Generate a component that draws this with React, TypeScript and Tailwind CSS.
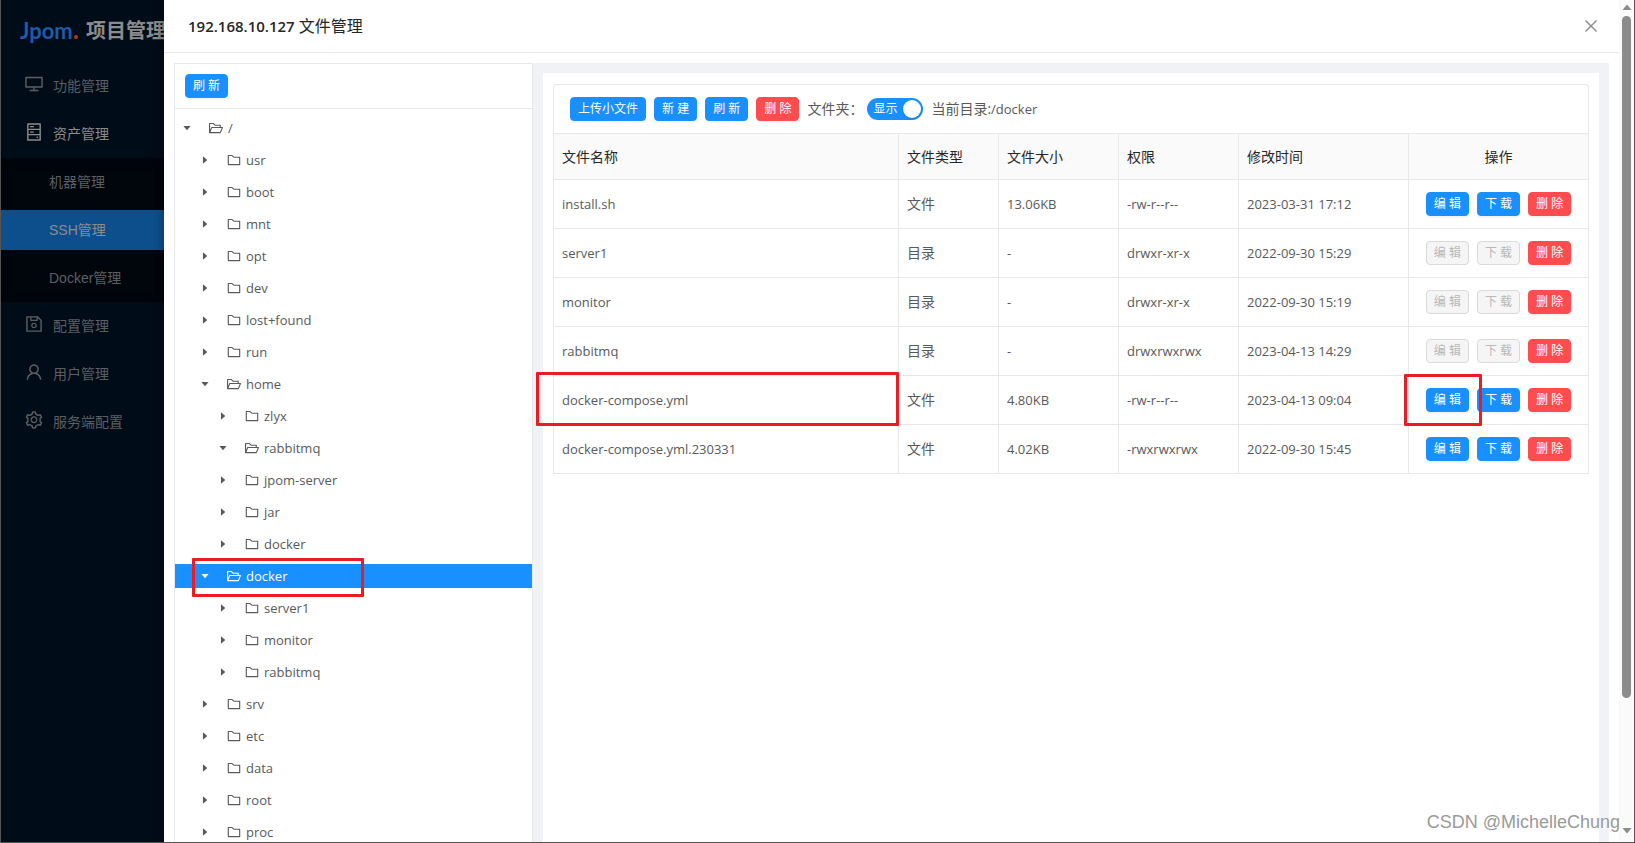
import { useState } from "react";
import clsx from "clsx";
import {
  AiFillCaretDown,
  AiFillCaretRight,
  AiOutlineClose,
  AiOutlineDesktop,
  AiOutlineFolder,
  AiOutlineFolderOpen,
  AiOutlineHdd,
  AiOutlineSave,
  AiOutlineSetting,
  AiOutlineUser,
} from "react-icons/ai";

const MENU = [
  { label: "功能管理", icon: AiOutlineDesktop },
  {
    label: "资产管理",
    icon: AiOutlineHdd,
    children: ["机器管理", "SSH管理", "Docker管理"],
  },
  { label: "配置管理", icon: AiOutlineSave },
  { label: "用户管理", icon: AiOutlineUser },
  { label: "服务端配置", icon: AiOutlineSetting },
];

const INDENT = ["pl-[5px]", "pl-[23px]", "pl-[41px]"];

const TREE = [
  { name: "/", level: 0, open: true },
  { name: "usr", level: 1 },
  { name: "boot", level: 1 },
  { name: "mnt", level: 1 },
  { name: "opt", level: 1 },
  { name: "dev", level: 1 },
  { name: "lost+found", level: 1 },
  { name: "run", level: 1 },
  { name: "home", level: 1, open: true },
  { name: "zlyx", level: 2 },
  { name: "rabbitmq", level: 2, open: true },
  { name: "jpom-server", level: 2 },
  { name: "jar", level: 2 },
  { name: "docker", level: 2 },
  { name: "docker", level: 1, open: true, selected: true },
  { name: "server1", level: 2 },
  { name: "monitor", level: 2 },
  { name: "rabbitmq", level: 2 },
  { name: "srv", level: 1 },
  { name: "etc", level: 1 },
  { name: "data", level: 1 },
  { name: "root", level: 1 },
  { name: "proc", level: 1 },
];

const FILES = [
  { name: "install.sh", dir: false, size: "13.06KB", mode: "-rw-r--r--", time: "2023-03-31 17:12" },
  { name: "server1", dir: true, size: "-", mode: "drwxr-xr-x", time: "2022-09-30 15:29" },
  { name: "monitor", dir: true, size: "-", mode: "drwxr-xr-x", time: "2022-09-30 15:19" },
  { name: "rabbitmq", dir: true, size: "-", mode: "drwxrwxrwx", time: "2023-04-13 14:29" },
  { name: "docker-compose.yml", dir: false, size: "4.80KB", mode: "-rw-r--r--", time: "2023-04-13 09:04", marked: true },
  { name: "docker-compose.yml.230331", dir: false, size: "4.02KB", mode: "-rwxrwxrwx", time: "2022-09-30 15:45" },
];

function Button({ children, danger = false, disabled = false }: { children: string; danger?: boolean; disabled?: boolean }) {
  return (
    <button
      type="button"
      disabled={disabled}
      className={clsx(
        "h-6 shrink-0 whitespace-nowrap rounded border px-[7px] text-xs leading-5",
        disabled
          ? "border-[#d9d9d9] bg-[#f5f5f5] text-[#b8b8b8]"
          : danger
            ? "border-[#ff4d4f] bg-[#ff4d4f] text-white shadow-[0_2px_0_rgba(0,0,0,0.045)]"
            : "border-[#1890ff] bg-[#1890ff] text-white shadow-[0_2px_0_rgba(0,0,0,0.045)]",
      )}
    >
      {children}
    </button>
  );
}

function Marker({ className }: { className: string }) {
  return (
    <span className={clsx("pointer-events-none absolute z-10 rounded-[1px] border-3 border-[#ed1c24]", className)} />
  );
}

function Sidebar() {
  return (
    <aside className="w-[163px] shrink-0 overflow-hidden bg-[#000c17] font-['Liberation_Sans','Noto_Sans_CJK_SC',sans-serif] text-sm text-[#5b5f63]">
      <div className="flex h-[62px] items-center pl-[19px] whitespace-nowrap">
        <span className="flex w-[66px] shrink-0 items-baseline gap-px font-['Lato',sans-serif] text-[22px] leading-6 font-bold text-[#1f5ba8]">
          Jpom
          <span className="size-1 rounded-full bg-[#a8400f]" />
        </span>
        <span className="text-xl font-bold text-[#8c8c8c]">项目管理</span>
      </div>
      <nav>
        {MENU.map((item) => (
          <div key={item.label} className="flow-root">
            <a
              href="#"
              className={clsx("my-1 flex h-10 items-center gap-[9px] pl-[23px]", item.children && "text-[#8c8c8c]")}
            >
              <item.icon className="mb-1 size-5" />
              {item.label}
            </a>
            {item.children && (
              <div className="flex flex-col gap-2 bg-[#00060c] py-1 shadow-[inset_0_2px_8px_rgba(0,0,0,0.45)]">
                {item.children.map((child) => (
                  <a
                    key={child}
                    href="#"
                    className={clsx(
                      "flex h-10 items-center pl-12",
                      child === "SSH管理" && "bg-[#0d4f8c] text-[#8c8c8c]",
                    )}
                  >
                    {child}
                  </a>
                ))}
              </div>
            )}
          </div>
        ))}
      </nav>
    </aside>
  );
}

function FileTree() {
  return (
    <section className="w-[359px] shrink-0 border border-b-0 border-[#e8e8e8]">
      <div className="flex h-[45px] items-center border-b border-[#e8e8e8] px-2.5">
        <Button>刷 新</Button>
      </div>
      <ul className="pt-[7px] text-[13px] leading-6">
        {TREE.map((node, i) => {
          const Caret = node.open ? AiFillCaretDown : AiFillCaretRight;
          const Icon = node.open ? AiOutlineFolderOpen : AiOutlineFolder;
          return (
            <li key={i} className="relative mb-2 h-6">
              <button
                type="button"
                className={clsx(
                  "flex h-6 w-full items-center text-left",
                  INDENT[node.level],
                  node.selected && "bg-[#1890ff] text-white",
                )}
              >
                <Caret className="mx-[2px] size-[10px]" />
                <Icon className="mr-1 ml-[14px] size-4" />
                {node.name}
              </button>
              {node.selected && <Marker className="-top-1.5 left-[17px] h-[39px] w-[172px]" />}
            </li>
          );
        })}
      </ul>
    </section>
  );
}

function FileTable() {
  const [showFolders, setShowFolders] = useState(true);
  const cell = "h-[49px] border-r border-b border-[#e8e8e8] px-2 last:border-r-0";
  const head = "h-[46px] border-r border-b border-[#e8e8e8] px-2 text-left font-normal last:border-r-0 last:text-center";

  return (
    <div className="rounded-t border border-b-0 border-[#e8e8e8]">
      <div className="flex h-[49px] items-center gap-2 border-b border-[#e8e8e8] px-4">
        <Button>上传小文件</Button>
        <Button>新 建</Button>
        <Button>刷 新</Button>
        <Button danger>删 除</Button>
        <label className="flex items-center gap-1">
          文件夹：
          <input
            type="checkbox"
            role="switch"
            className="sr-only"
            checked={showFolders}
            onChange={(e) => setShowFolders(e.target.checked)}
          />
          <span
            className={clsx(
              "flex h-[22px] w-14 items-center justify-between rounded-full pr-0.5 pl-1.5 text-xs text-white",
              showFolders ? "bg-[#1890ff]" : "flex-row-reverse bg-[#bfbfbf]",
            )}
          >
            {showFolders ? "显示" : "隐藏"}
            <span className="size-[18px] rounded-full bg-white shadow-sm" />
          </span>
        </label>
        <span>
          当前目录:<span className="text-[13px]">/docker</span>
        </span>
      </div>
      <table className="w-full table-fixed border-separate border-spacing-0">
        <colgroup>
          <col />
          <col className="w-[100px]" />
          <col className="w-[120px]" />
          <col className="w-[120px]" />
          <col className="w-[170px]" />
          <col className="w-[179px]" />
        </colgroup>
        <thead className="bg-[#fafafa] text-[#262626]">
          <tr>
            {["文件名称", "文件类型", "文件大小", "权限", "修改时间", "操作"].map((title) => (
              <th key={title} className={head}>
                {title}
              </th>
            ))}
          </tr>
        </thead>
        <tbody className="text-[13px]">
          {FILES.map((file) => (
            <tr key={file.name}>
              <td className={clsx(cell, "relative")}>
                {file.name}
                {file.marked && <Marker className="-top-1 -right-px -bottom-0.5 -left-[18px]" />}
              </td>
              <td className={clsx(cell, "text-sm")}>{file.dir ? "目录" : "文件"}</td>
              <td className={cell}>{file.size}</td>
              <td className={cell}>{file.mode}</td>
              <td className={cell}>{file.time}</td>
              <td className={cell}>
                <div className="flex justify-center gap-2">
                  <span className="relative flex">
                    <Button disabled={file.dir}>编 辑</Button>
                    {file.marked && <Marker className="-inset-y-3.5 -right-[13px] -left-[22px]" />}
                  </span>
                  <Button disabled={file.dir}>下 载</Button>
                  <Button danger>删 除</Button>
                </div>
              </td>
            </tr>
          ))}
        </tbody>
      </table>
    </div>
  );
}

function Scrollbar() {
  return (
    <div className="flex w-[15px] shrink-0 flex-col items-center bg-[#fafafa] py-1 text-[#8b8b8b]">
      <svg viewBox="0 0 10 6" className="mb-1.5 h-1.5 w-2.5" fill="currentColor">
        <path d="M5 0.5 9.5 6H0.5z" />
      </svg>
      <div className="w-full flex-1">
        <div className="mx-auto h-[84%] w-[9px] rounded-full bg-[#8b8b8b]" />
      </div>
      <svg viewBox="0 0 10 6" className="mb-1 h-1.5 w-2.5" fill="currentColor">
        <path d="M5 5.5 0.5 0h9z" />
      </svg>
    </div>
  );
}

export default function App() {
  return (
    <div className="relative flex h-screen overflow-hidden border-x border-b border-[#555] font-['Open_Sans','Noto_Sans_CJK_SC',sans-serif] text-sm text-[#595959]">
      <Sidebar />
      <main className="flex min-w-0 flex-1 flex-col bg-white shadow-[-2px_0_8px_rgba(0,0,0,0.3)]">
        <header className="flex h-[53px] shrink-0 items-center justify-between border-b border-[#e8e8e8] pr-[19px] pl-6">
          <h1 className="text-base leading-6 text-[#262626]">
            <span className="text-[15px] font-semibold">192.168.10.127</span> 文件管理
          </h1>
          <button type="button" aria-label="关闭">
            <AiOutlineClose className="size-[18px] text-[#8c8c8c]" />
          </button>
        </header>
        <div className="flex min-h-0 flex-1 px-2.5 pt-2.5">
          <FileTree />
          <div className="min-w-0 flex-1 bg-[#f0f2f5] px-2.5 pt-2.5">
            <div className="h-full bg-white px-2.5 pt-[11px]">
              <FileTable />
            </div>
          </div>
        </div>
      </main>
      <Scrollbar />
      <p className="absolute right-3.5 bottom-2 z-20 font-['Liberation_Sans',sans-serif] text-lg leading-6 text-[#9a9a9a] [text-shadow:1px_1px_0_#fff]">
        CSDN @MichelleChung
      </p>
    </div>
  );
}
